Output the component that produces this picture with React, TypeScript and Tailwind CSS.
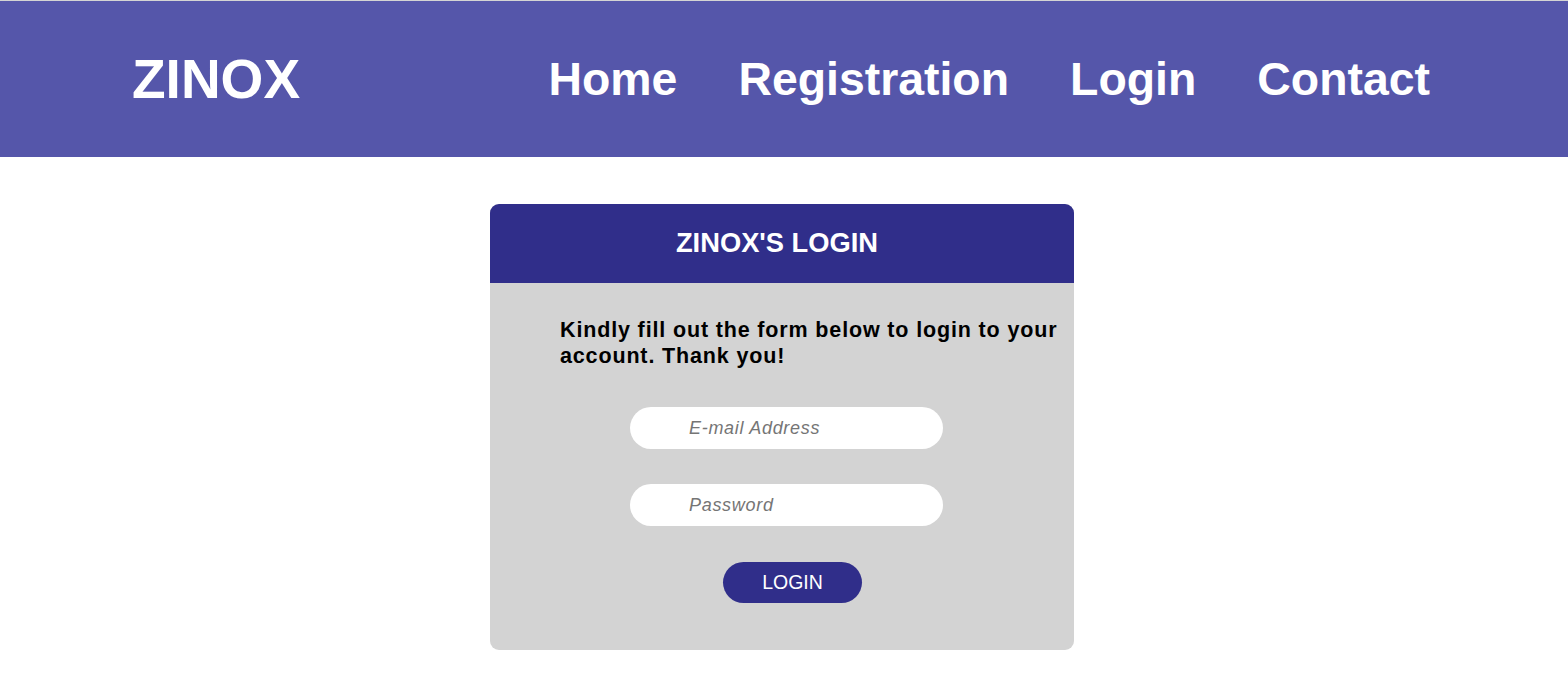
import { useState } from "react";

const navLinks = ["Home", "Registration", "Login", "Contact"];

export default function App() {
  const [email, setEmail] = useState("");
  const [password, setPassword] = useState("");

  return (
    <div className="min-h-screen bg-white font-['Liberation_Sans',Arial,sans-serif]">
      <header className="flex h-[157px] items-center border-t border-[#d4d4d4] bg-[#5556aa] pl-[132px] pr-[138px] text-white">
        <h1 className="text-[55px] font-bold leading-none">ZINOX</h1>
        <nav className="ml-auto flex items-center gap-[61px]">
          {navLinks.map((link) => (
            <a key={link} href="#" className="text-[46.4px] font-bold leading-none">
              {link}
            </a>
          ))}
        </nav>
      </header>

      <div className="flex justify-center pr-[4px] pt-[47px]">
        <div className="w-[584px] overflow-hidden rounded-[9px] bg-[#d3d3d3]">
          <div className="flex h-[79px] items-center justify-center bg-[#302e8a] pr-[10px]">
            <h2 className="text-[27.3px] font-bold text-white">ZINOX'S LOGIN</h2>
          </div>

          <form
            className="flex flex-col pb-[47px] pt-[34px]"
            onSubmit={(e) => e.preventDefault()}
          >
            <p className="pl-[70px] text-[21.5px] font-bold leading-[26px] tracking-[0.85px] text-black">
              Kindly fill out the form below to login to your account. Thank you!
            </p>

            <input
              type="email"
              value={email}
              onChange={(e) => setEmail(e.target.value)}
              placeholder="E-mail Address"
              className="ml-[140px] mt-[38px] h-[42px] w-[313px] rounded-full bg-white pl-[59px] text-[18px] italic tracking-[0.7px] text-black outline-none placeholder:text-[#757575]"
            />
            <input
              type="password"
              value={password}
              onChange={(e) => setPassword(e.target.value)}
              placeholder="Password"
              className="ml-[140px] mt-[35px] h-[42px] w-[313px] rounded-full bg-white pl-[59px] text-[18px] italic tracking-[0.7px] text-black outline-none placeholder:text-[#757575]"
            />

            <button
              type="submit"
              className="ml-[233px] mt-[36px] h-[41px] w-[139px] rounded-full bg-[#302e8a] text-[19.5px] text-white"
            >
              LOGIN
            </button>
          </form>
        </div>
      </div>
    </div>
  );
}
